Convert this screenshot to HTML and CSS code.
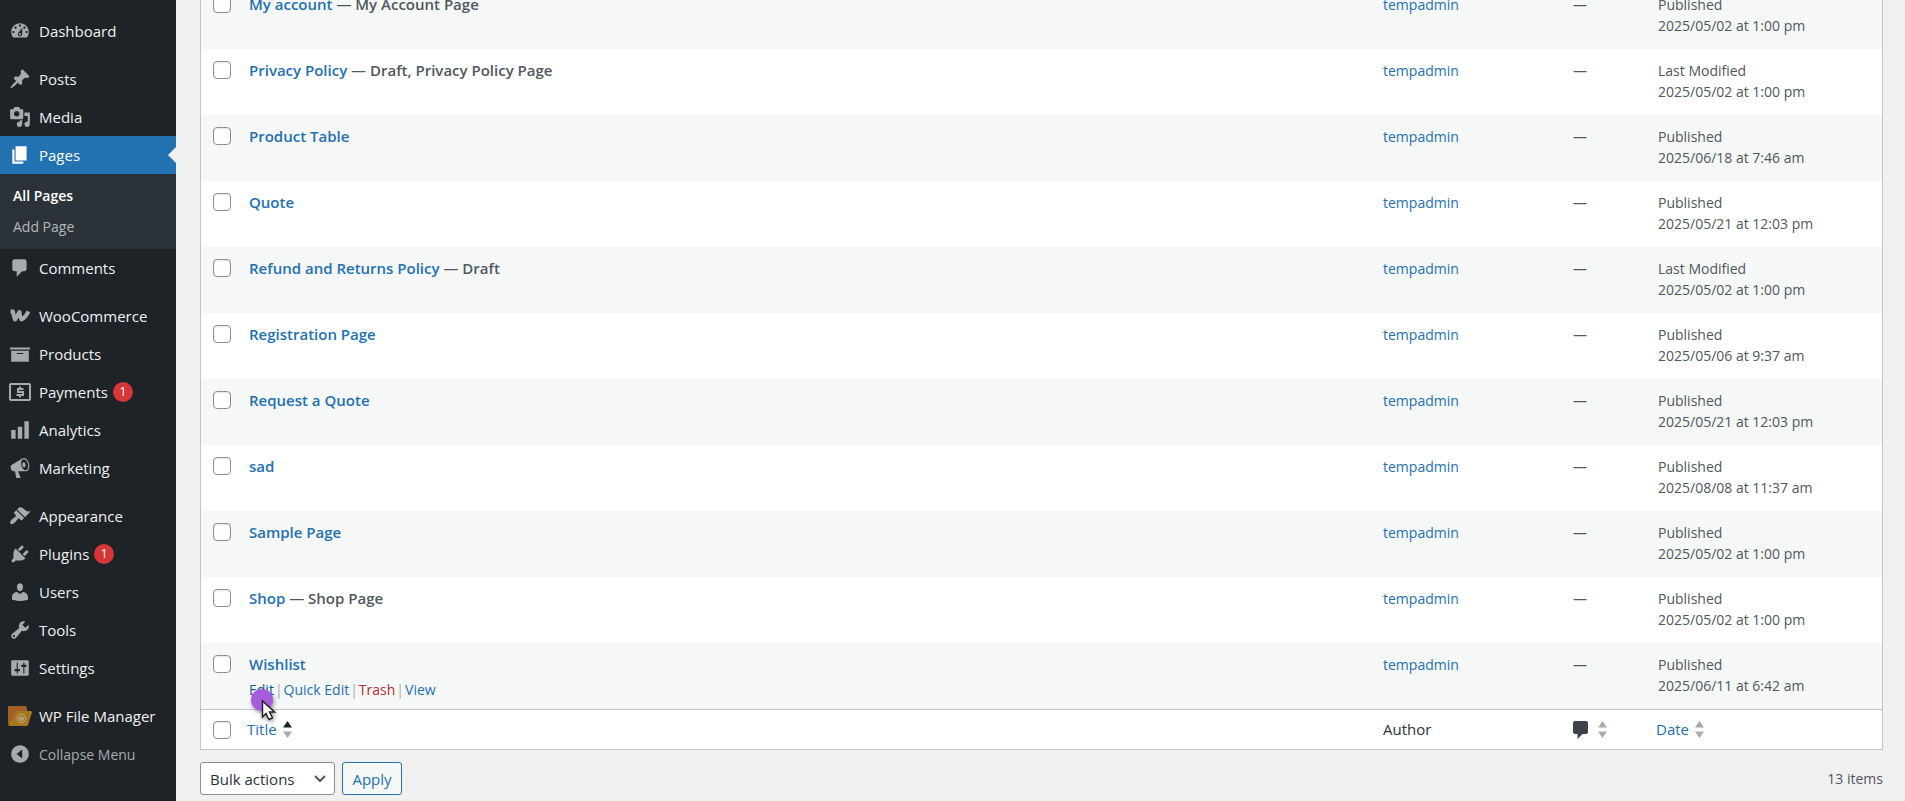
FILE: index.html
```
<!DOCTYPE html>
<html lang="en">
<head>
    <meta charset="UTF-8">
    <meta name="viewport" content="width=device-width, initial-scale=1.0">
    <title>Pages</title>
    <link rel="stylesheet" href="styles.css">
</head>
<body>
    <div class="admin">
        <nav class="menu" aria-label="Main menu">
            <ul class="menu-group">
                <li><a class="menu-item" href="#"><svg class="icon" viewBox="0 0 20 20"><path d="M3.76 16h12.48c1.1-1.37 1.76-3.11 1.76-5 0-4.42-3.58-8-8-8s-8 3.58-8 8c0 1.89.66 3.63 1.76 5zM10 4c.55 0 1 .45 1 1s-.45 1-1 1-1-.45-1-1 .45-1 1-1zM6 6c.55 0 1 .45 1 1s-.45 1-1 1-1-.45-1-1 .45-1 1-1zm8 0c.55 0 1 .45 1 1s-.45 1-1 1-1-.45-1-1 .45-1 1-1zm-5.37 5.55L12 7v6c0 1.1-.9 2-2 2s-2-.9-2-2c0-.57.24-1.08.63-1.45zM4 10c.55 0 1 .45 1 1s-.45 1-1 1-1-.45-1-1 .45-1 1-1zm12 0c.55 0 1 .45 1 1s-.45 1-1 1-1-.45-1-1 .45-1 1-1zm-5 3c0-.55-.45-1-1-1s-1 .45-1 1 .45 1 1 1 1-.45 1-1z"/></svg>Dashboard</a></li>
            </ul>
            <ul class="menu-group">
                <li><a class="menu-item" href="#"><svg class="icon" viewBox="0 0 20 20"><path d="M10.44 3.02l1.82-1.82 6.36 6.35-1.83 1.82c-1.05-.68-2.48-.57-3.41.36l-.75.75c-.92.93-1.04 2.35-.35 3.41l-1.83 1.82-2.41-2.41-2.8 2.79c-.42.42-3.38 2.71-3.8 2.29s1.86-3.39 2.28-3.81l2.79-2.79L4.1 9.36l1.83-1.82c1.05.69 2.48.57 3.4-.36l.75-.75c.93-.92 1.05-2.35.36-3.41z"/></svg>Posts</a></li>
                <li><a class="menu-item" href="#"><svg class="icon" viewBox="0 0 20 20"><path d="M13 11V4c0-.55-.45-1-1-1h-1.67L9 1H5L3.67 3H2c-.55 0-1 .45-1 1v7c0 .55.45 1 1 1h10c.55 0 1-.45 1-1zM7 4.5c1.38 0 2.5 1.12 2.5 2.5S8.38 9.5 7 9.5 4.5 8.38 4.5 7 5.62 4.5 7 4.5zM14 6h5v10.5c0 1.38-1.12 2.5-2.5 2.5S14 17.88 14 16.5s1.12-2.5 2.5-2.5c.17 0 .34.02.5.05V9h-3V6zm-4 8.05V13h2v3.5c0 1.38-1.12 2.5-2.5 2.5S7 17.88 7 16.5 8.12 14 9.5 14c.17 0 .34.02.5.05z"/></svg>Media</a></li>
                <li>
                    <a class="menu-item current" href="#"><svg class="icon" viewBox="0 0 20 20"><path d="M6 15V2h10v13H6zm-1 1h8v2H3V5h2v11z"/></svg>Pages</a>
                    <ul class="submenu">
                        <li><a class="current" href="#">All Pages</a></li>
                        <li><a href="#">Add Page</a></li>
                    </ul>
                </li>
                <li><a class="menu-item" href="#"><svg class="icon" viewBox="0 0 20 20"><path d="M5 2h9c1.1 0 2 .9 2 2v7c0 1.1-.9 2-2 2h-2l-5 5v-5H5c-1.1 0-2-.9-2-2V4c0-1.1.9-2 2-2z"/></svg>Comments</a></li>
            </ul>
            <ul class="menu-group">
                <li><a class="menu-item" href="#"><svg class="icon icon-woo" viewBox="0 0 22 22"><path d="M1.500 6.500H4q.5 4.500 2 8Q8.500 11 10.500 7q0 4 2 7.500Q16 13 19.500 6.500"/></svg>WooCommerce</a></li>
                <li><a class="menu-item" href="#"><svg class="icon" viewBox="0 0 20 20"><path d="M19 4v2H1V4h18zM2 7h16v10H2V7zm11 3V9H7v1h6z"/></svg>Products</a></li>
                <li><a class="menu-item" href="#"><svg class="icon icon-line" viewBox="0 0 22 22"><rect x="1" y="3" width="20" height="16" rx="1"/><path d="M14.500 8H9v3h5v3H7.500M11 5.500V8m0 6v2.500"/></svg>Payments <span class="count">1</span></a></li>
                <li><a class="menu-item" href="#"><svg class="icon" viewBox="0 0 20 20"><path d="M18 18V2h-4v16h4zm-6 0V7H8v11h4zm-6 0v-8H2v8h4z"/></svg>Analytics</a></li>
                <li><a class="menu-item" href="#"><svg class="icon" viewBox="0 0 20 20"><path d="M18.150 5.940c.46 1.620.38 3.220-.02 4.480-.42 1.280-1.260 2.180-2.300 2.480-.16.060-.26.060-.4.060-.06.020-.12.020-.18.020-.06.020-.14.020-.22.020h-6.800l2.220 5.500c.02.140-.06.260-.14.340-.08.100-.24.160-.34.160H6.950c-.1 0-.26-.060-.34-.160-.08-.080-.16-.200-.14-.340l-1-5.500H4.250l-.02-.020c-.5.060-1.080-.180-1.540-.620s-.88-1.080-1.060-1.880c-.24-.8-.2-1.560-.02-2.200.18-.62.58-1.080 1.060-1.300l.02-.02 9-5.400c.1-.06.18-.1.24-.16.06-.04.14-.08.24-.12.16-.08.28-.12.5-.18 1.040-.3 2.240.1 3.220.98s1.840 2.240 2.260 3.860zm-2.580 5.980h-.02c.4-.1.74-.34 1.040-.7.58-.7.86-1.760.86-3.040 0-.64-.1-1.300-.28-1.980-.34-1.360-1.020-2.500-1.780-3.240s-1.680-1.100-2.460-.88c-.82.22-1.400.96-1.700 2-.32 1.040-.28 2.360.06 3.720.38 1.360 1 2.500 1.800 3.240.78.74 1.620 1.100 2.480.88zm-2.540-7.080c.22-.04.42-.02.62.04.38.16.76.48 1.020 1s.42 1.200.42 1.780c0 .3-.04.56-.12.8-.18.48-.44.84-.86.94-.34.1-.8-.06-1.140-.4s-.64-.86-.78-1.500c-.18-.62-.12-1.240.02-1.720s.48-.84.82-.94z"/></svg>Marketing</a></li>
            </ul>
            <ul class="menu-group">
                <li><a class="menu-item" href="#"><svg class="icon" viewBox="0 0 20 20"><path d="M14.48 11.06L7.41 3.99l1.5-1.5c.5-.56 2.3-.47 3.51.32 1.21.8 1.43 1.28 2.91 2.1 1.18.64 2.45 1.26 4.45.85zm-.71.71L6.7 4.7 4.93 6.47c-.39.39-.39 1.02 0 1.41l1.06 1.06c.39.39.39 1.03 0 1.42-.6.6-1.43 1.11-2.21 1.69-.35.26-.7.53-1.01.84C1.43 14.23.4 16.08 1.4 17.07c.99 1 2.84-.03 4.18-1.36.31-.31.58-.66.85-1.02.57-.78 1.08-1.61 1.69-2.21.39-.39 1.02-.39 1.41 0l1.06 1.06c.39.39 1.02.39 1.41 0z"/></svg>Appearance</a></li>
                <li><a class="menu-item" href="#"><svg class="icon" viewBox="0 0 20 20"><path d="M13.11 4.36L9.87 7.6 8 5.73l3.24-3.24c.35-.34 1.05-.2 1.56.32.52.51.66 1.21.31 1.55zm-8 1.77l.91-1.12 9.01 9.01-1.19.84c-.71.71-2.63 1.16-3.82 1.16H6.14L4.9 17.26c-.59.59-1.54.59-2.12 0-.59-.58-.59-1.53 0-2.12l1.24-1.24v-3.88c0-1.13.4-3.19 1.09-3.89zm7.26 3.97l3.24-3.24c.34-.35 1.04-.21 1.55.31.52.51.66 1.21.31 1.55l-3.24 3.25z"/></svg>Plugins <span class="count">1</span></a></li>
                <li><a class="menu-item" href="#"><svg class="icon" viewBox="0 0 20 20"><path d="M10 9.25c-2.27 0-2.73-3.44-2.73-3.44C7 4.02 7.82 2 9.97 2c2.16 0 2.98 2.02 2.71 3.81 0 0-.41 3.44-2.68 3.44zm0 2.57L12.72 10c2.39 0 4.52 2.33 4.52 4.53v2.49s-3.65 1.13-7.24 1.13c-3.65 0-7.24-1.13-7.24-1.13v-2.49c0-2.25 1.94-4.48 4.47-4.48z"/></svg>Users</a></li>
                <li><a class="menu-item" href="#"><svg class="icon" viewBox="0 0 20 20"><path d="M16.68 9.77c-1.34 1.34-3.3 1.67-4.95.99l-5.41 6.52c-.99.99-2.59.99-3.58 0s-.99-2.59 0-3.57l6.52-5.42c-.68-1.65-.35-3.61.99-4.95 1.28-1.28 3.12-1.62 4.72-1.06l-2.89 2.89 2.82 2.82 2.86-2.87c.53 1.58.18 3.39-1.08 4.65zM3.81 16.21c.4.39 1.04.39 1.43 0 .4-.4.4-1.04 0-1.43-.39-.4-1.03-.4-1.43 0-.39.39-.39 1.03 0 1.43z"/></svg>Tools</a></li>
                <li><a class="menu-item" href="#"><svg class="icon" viewBox="0 0 20 20"><path d="M18 16V4c0-.55-.45-1-1-1H3c-.55 0-1 .45-1 1v12c0 .55.45 1 1 1h14c.55 0 1-.45 1-1zM8 11h1c.55 0 1 .45 1 1s-.45 1-1 1H8v1.500c0 .28-.22.5-.5.5s-.5-.22-.5-.5V13H6c-.55 0-1-.45-1-1s.45-1 1-1h1V5.500c0-.28.22-.5.5-.5s.5.22.5.5V11zm5-2h-1c-.55 0-1-.45-1-1s.45-1 1-1h1V5.500c0-.28.22-.5.5-.5s.5.22.5.5V7h1c.55 0 1 .45 1 1s-.45 1-1 1h-1v5.500c0 .28-.22.5-.5.5s-.5-.22-.5-.5V9z"/></svg>Settings</a></li>
            </ul>
            <ul class="menu-group">
                <li><a class="menu-item" href="#"><svg class="icon icon-folder" viewBox="0 0 26 22"><path fill="#a35f26" d="M2 1h16q2 0 2 2v16H1V2q0-1 1-1z"/><path fill="#a5761f" d="M9 6h15q1.500 0 1 1.500L21 20q-.5 1-2 1H1z"/><circle cx="14.500" cy="13.500" r="4.300" fill="none" stroke="#b9a27c"/><path fill="none" stroke="#b9a27c" stroke-width="1.300" d="M11.800 11.500l1.400 4 1.300-3.500 1.300 3.500 1.400-4"/></svg>WP File Manager</a></li>
                <li><button class="menu-item collapse" type="button"><svg class="icon" viewBox="0 0 20 20"><path d="M10 2c4.420 0 8 3.580 8 8s-3.580 8-8 8-8-3.580-8-8 3.580-8 8-8zm2 12V6l-5 4z"/></svg>Collapse Menu</button></li>
            </ul>
        </nav>

        <main class="content">
            <table class="pages">
                <colgroup>
                    <col class="col-check">
                    <col>
                    <col class="col-author">
                    <col class="col-comments">
                    <col class="col-date">
                </colgroup>
                <tbody>
                    <tr>
                        <td><input type="checkbox" aria-label="Select My account"></td>
                        <td class="title"><a href="#">My account</a> — My Account Page</td>
                        <td><a href="#">tempadmin</a></td>
                        <td>—</td>
                        <td>Published<br>2025/05/02 at 1:00 pm</td>
                    </tr>
                    <tr>
                        <td><input type="checkbox" aria-label="Select Privacy Policy"></td>
                        <td class="title"><a href="#">Privacy Policy</a> — Draft, Privacy Policy Page</td>
                        <td><a href="#">tempadmin</a></td>
                        <td>—</td>
                        <td>Last Modified<br>2025/05/02 at 1:00 pm</td>
                    </tr>
                    <tr>
                        <td><input type="checkbox" aria-label="Select Product Table"></td>
                        <td class="title"><a href="#">Product Table</a></td>
                        <td><a href="#">tempadmin</a></td>
                        <td>—</td>
                        <td>Published<br>2025/06/18 at 7:46 am</td>
                    </tr>
                    <tr>
                        <td><input type="checkbox" aria-label="Select Quote"></td>
                        <td class="title"><a href="#">Quote</a></td>
                        <td><a href="#">tempadmin</a></td>
                        <td>—</td>
                        <td>Published<br>2025/05/21 at 12:03 pm</td>
                    </tr>
                    <tr>
                        <td><input type="checkbox" aria-label="Select Refund and Returns Policy"></td>
                        <td class="title"><a href="#">Refund and Returns Policy</a> — Draft</td>
                        <td><a href="#">tempadmin</a></td>
                        <td>—</td>
                        <td>Last Modified<br>2025/05/02 at 1:00 pm</td>
                    </tr>
                    <tr>
                        <td><input type="checkbox" aria-label="Select Registration Page"></td>
                        <td class="title"><a href="#">Registration Page</a></td>
                        <td><a href="#">tempadmin</a></td>
                        <td>—</td>
                        <td>Published<br>2025/05/06 at 9:37 am</td>
                    </tr>
                    <tr>
                        <td><input type="checkbox" aria-label="Select Request a Quote"></td>
                        <td class="title"><a href="#">Request a Quote</a></td>
                        <td><a href="#">tempadmin</a></td>
                        <td>—</td>
                        <td>Published<br>2025/05/21 at 12:03 pm</td>
                    </tr>
                    <tr>
                        <td><input type="checkbox" aria-label="Select sad"></td>
                        <td class="title"><a href="#">sad</a></td>
                        <td><a href="#">tempadmin</a></td>
                        <td>—</td>
                        <td>Published<br>2025/08/08 at 11:37 am</td>
                    </tr>
                    <tr>
                        <td><input type="checkbox" aria-label="Select Sample Page"></td>
                        <td class="title"><a href="#">Sample Page</a></td>
                        <td><a href="#">tempadmin</a></td>
                        <td>—</td>
                        <td>Published<br>2025/05/02 at 1:00 pm</td>
                    </tr>
                    <tr>
                        <td><input type="checkbox" aria-label="Select Shop"></td>
                        <td class="title"><a href="#">Shop</a> — Shop Page</td>
                        <td><a href="#">tempadmin</a></td>
                        <td>—</td>
                        <td>Published<br>2025/05/02 at 1:00 pm</td>
                    </tr>
                    <tr>
                        <td><input type="checkbox" aria-label="Select Wishlist"></td>
                        <td class="title">
                            <a href="#">Wishlist</a>
                            <div class="row-actions">
                                <a class="hovered" href="#">Edit</a>
                                <span>|</span>
                                <a href="#">Quick Edit</a>
                                <span>|</span>
                                <a class="trash" href="#">Trash</a>
                                <span>|</span>
                                <a href="#">View</a>
                                <svg class="pointer" viewBox="0 0 32 40"><circle cx="13" cy="13" r="11" fill="#a65cdb"/><path fill="#fff" stroke="#222" stroke-width="1.500" d="M13.500 14v16l3.500-3.500 3 6 3.500-1.700-3-5.800h5z"/></svg>
                            </div>
                        </td>
                        <td><a href="#">tempadmin</a></td>
                        <td>—</td>
                        <td>Published<br>2025/06/11 at 6:42 am</td>
                    </tr>
                </tbody>
                <tfoot>
                    <tr>
                        <td><input type="checkbox" aria-label="Select All"></td>
                        <th class="sortable" scope="col"><a class="sort sorted" href="#">Title <svg class="arrows" viewBox="0 0 9 17"><path d="M0 6.500L4.500 0 9 6.500z"/><path d="M0 10.500h9L4.500 17z"/></svg></a></th>
                        <th scope="col">Author</th>
                        <th scope="col"><a class="sort" href="#" aria-label="Comments"><svg class="bubble" viewBox="0 0 15 18"><path d="M2 0h11q2 0 2 2v9q0 2-2 2H9.500L4.500 18v-5H2q-2 0-2-2V2q0-2 2-2z"/></svg><svg class="arrows" viewBox="0 0 9 17"><path d="M0 6.500L4.500 0 9 6.500z"/><path d="M0 10.500h9L4.500 17z"/></svg></a></th>
                        <th class="sortable" scope="col"><a class="sort" href="#">Date <svg class="arrows" viewBox="0 0 9 17"><path d="M0 6.500L4.500 0 9 6.500z"/><path d="M0 10.500h9L4.500 17z"/></svg></a></th>
                    </tr>
                </tfoot>
            </table>

            <div class="tablenav">
                <div class="bulk">
                    <select aria-label="Select bulk action">
                        <option>Bulk actions</option>
                        <option>Edit</option>
                        <option>Move to Trash</option>
                    </select>
                    <svg class="chevron" viewBox="0 0 12 8"><path d="M1 1l5 5 5-5"/></svg>
                </div>
                <button class="apply" type="button">Apply</button>
                <span class="total">13 items</span>
            </div>
        </main>
    </div>
</body>
</html>
```

FILE: styles.css
```
:root {
    --blue: #2271b1;
    --dark: #1d2327;
    --text: #50575e;
    --border: #c3c4c7;
    --grey: #a7aaad;
    --page: #f0f0f1;
}

* {
    box-sizing: border-box;
    margin: 0;
    padding: 0;
}

body {
    font-family: 'Segoe UI', 'Open Sans', 'Noto Sans', sans-serif;
    font-size: 14px;
    line-height: 21px;
    background: var(--page);
    color: var(--text);
}

a {
    color: var(--blue);
    text-decoration: none;
}

.admin {
    display: flex;
    height: 100vh;
    overflow: hidden;
}

/* Side menu */
.menu {
    flex: none;
    width: 176px;
    padding-top: 2px;
    background: var(--dark);
}

.menu ul {
    list-style: none;
}

.menu-group {
    padding-top: 10px;
}

.menu-item {
    position: relative;
    display: flex;
    align-items: center;
    width: 100%;
    height: 38px;
    padding-left: 9px;
    font-size: 15px;
    color: var(--page);
}

.menu-item.current {
    background: var(--blue);
    color: #fff;
}

.menu-item.current::after {
    content: "";
    position: absolute;
    right: 0;
    border: 8px solid transparent;
    border-left: 0;
    border-right-color: var(--page);
}

.icon {
    flex: none;
    width: 22px;
    height: 22px;
    margin-right: 8px;
    fill: var(--grey);
}

.current .icon {
    fill: #fff;
}

.icon-line,
.icon-woo {
    fill: none;
    stroke: var(--grey);
    stroke-width: 2;
}

.icon-woo {
    stroke-width: 4;
    stroke-linejoin: round;
}

.icon-folder {
    width: 26px;
    margin: 0 6px 0 -2px;
}

.count {
    width: 20px;
    height: 20px;
    margin-left: 5px;
    border-radius: 50%;
    background: #d63638;
    color: #fff;
    font-size: 12px;
    line-height: 20px;
    text-align: center;
}

.submenu {
    padding: 6px 0 7px;
    background: #2c3338;
}

.submenu a {
    display: block;
    height: 31px;
    padding-left: 13px;
    line-height: 31px;
    color: #b4b9be;
}

.submenu .current {
    color: #fff;
    font-weight: 600;
}

.collapse {
    border: 0;
    background: none;
    font-family: inherit;
    font-size: 14px;
    color: var(--grey);
}

/* Pages table, scrolled to its end */
.content {
    flex: 1;
    display: flex;
    flex-direction: column;
    justify-content: flex-end;
    padding: 0 22px 6px 24px;
}

.pages {
    width: 100%;
    table-layout: fixed;
    border: 1px solid var(--border);
    border-spacing: 0;
    background: #fff;
}

.col-check {
    width: 40px;
}

.col-author {
    width: 190px;
}

.col-comments {
    width: 85px;
}

.col-date {
    width: 232px;
}

tbody tr {
    height: 66px;
}

tbody tr:nth-child(odd) {
    background: #f6f7f7;
}

.pages td {
    padding: 11px 8px 8px;
    vertical-align: top;
}

.pages input {
    display: block;
    appearance: none;
    width: 18px;
    height: 18px;
    margin: 1px 0 0 4px;
    border: 1px solid #8c8f94;
    border-radius: 4px;
    background: #fff;
    box-shadow: inset 0 1px 2px rgba(0, 0, 0, 0.1);
}

.title,
.title > a {
    font-size: 15px;
    font-weight: 600;
}

.row-actions {
    position: relative;
    display: flex;
    gap: 1px;
    padding-top: 4px;
    font-size: 14px;
    font-weight: 400;
    color: var(--grey);
}

.row-actions .hovered {
    color: #135e96;
}

.row-actions .trash {
    color: #b32d2e;
}

.pointer {
    position: absolute;
    top: 12px;
    left: 0;
    width: 32px;
    height: 40px;
    filter: drop-shadow(1px 2px 2px rgba(0, 0, 0, 0.4));
}

.pages tfoot td,
.pages th {
    height: 40px;
    padding: 0 8px;
    border-top: 1px solid var(--border);
    font-size: 15px;
    font-weight: 400;
    text-align: left;
    vertical-align: middle;
    color: #2c3338;
}

.pages .sortable {
    padding-left: 6px;
}

.sort {
    display: flex;
    align-items: center;
    gap: 6px;
}

.arrows {
    width: 9px;
    height: 17px;
    fill: var(--grey);
}

.sorted path:first-child {
    fill: var(--dark);
}

.bubble {
    width: 15px;
    height: 18px;
    margin-right: 4px;
    fill: #3c434a;
}

/* Bulk actions bar */
.tablenav {
    display: flex;
    align-items: center;
    gap: 7px;
    padding-top: 12px;
}

.bulk {
    position: relative;
    display: flex;
}

.bulk select,
.apply {
    height: 33px;
    border: 1px solid #8c8f94;
    border-radius: 3px;
    background: #fff;
    color: #2c3338;
    font-family: inherit;
    font-size: 15px;
}

.bulk select {
    appearance: none;
    width: 135px;
    padding: 0 28px 0 9px;
}

.chevron {
    position: absolute;
    top: 13px;
    right: 9px;
    width: 12px;
    height: 8px;
    fill: none;
    stroke: #50575e;
    stroke-width: 2;
    pointer-events: none;
}

.bulk + .apply {
    width: 60px;
    border-color: var(--blue);
    background: #f6f7f7;
    color: var(--blue);
}

.total {
    margin-left: auto;
}
```
